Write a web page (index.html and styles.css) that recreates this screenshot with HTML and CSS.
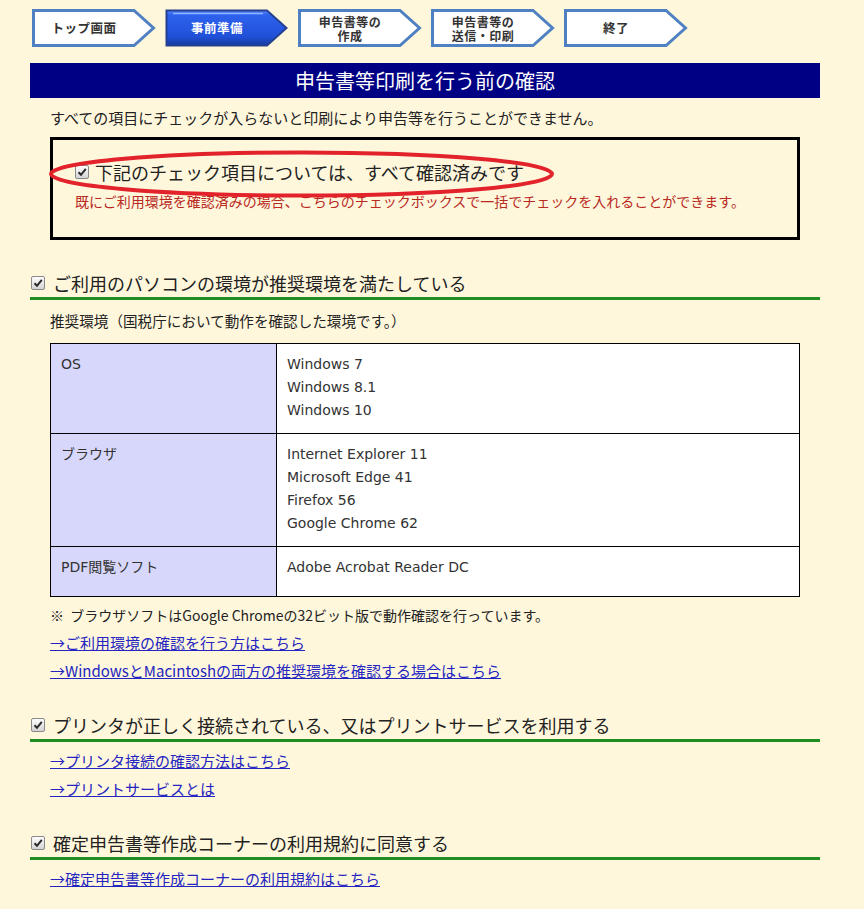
FILE: index.html
```html
<!DOCTYPE html>
<html lang="ja">
<head>
    <meta charset="UTF-8">
    <meta name="viewport" content="width=device-width, initial-scale=1.0">
    <title>申告書等印刷を行う前の確認</title>
    <link rel="stylesheet" href="styles.css">
</head>
<body>
    <div class="page">
        <div class="steps">
            <div class="step">トップ画面</div>
            <div class="step step-active">事前準備</div>
            <div class="step two-line">申告書等の<br>作成</div>
            <div class="step two-line">申告書等の<br>送信・印刷</div>
            <div class="step">終了</div>
        </div>

        <h1 class="page-title">申告書等印刷を行う前の確認</h1>
        <p class="intro">すべての項目にチェックが入らないと印刷により申告等を行うことができません。</p>

        <div class="confirm-all">
            <div class="confirm-row">
                <span class="check"><svg width="10" height="10" viewBox="0 0 10 10"><path d="M1.5 5.2 L4 7.8 L8.8 1.8" fill="none" stroke="#2b2b2b" stroke-width="2"/></svg></span>
                <span>下記のチェック項目については、すべて確認済みです</span>
            </div>
            <p class="confirm-note">既にご利用環境を確認済みの場合、こちらのチェックボックスで一括でチェックを入れることができます。</p>
            <svg class="ring" width="507" height="48" viewBox="0 0 507 48">
                <ellipse cx="253.5" cy="24" rx="250.5" ry="21.5" fill="none" stroke="#e3232b" stroke-width="4"/>
            </svg>
        </div>

        <h2 class="section-title">
            <span class="check"><svg width="10" height="10" viewBox="0 0 10 10"><path d="M1.5 5.2 L4 7.8 L8.8 1.8" fill="none" stroke="#2b2b2b" stroke-width="2"/></svg></span>
            ご利用のパソコンの環境が推奨環境を満たしている
        </h2>
        <div class="section-body">
            <p class="lead">推奨環境（国税庁において動作を確認した環境です。）</p>
            <table class="env-table">
                <tr>
                    <th>OS</th>
                    <td>Windows 7<br>Windows 8.1<br>Windows 10</td>
                </tr>
                <tr>
                    <th>ブラウザ</th>
                    <td>Internet Explorer 11<br>Microsoft Edge 41<br>Firefox 56<br>Google Chrome 62</td>
                </tr>
                <tr class="short-row">
                    <th>PDF閲覧ソフト</th>
                    <td>Adobe Acrobat Reader DC</td>
                </tr>
            </table>
            <p class="note">※&nbsp; ブラウザソフトはGoogle Chromeの32ビット版で動作確認を行っています。</p>
            <a class="link" href="#">→ご利用環境の確認を行う方はこちら</a>
            <a class="link" href="#">→WindowsとMacintoshの両方の推奨環境を確認する場合はこちら</a>
        </div>

        <h2 class="section-title">
            <span class="check"><svg width="10" height="10" viewBox="0 0 10 10"><path d="M1.5 5.2 L4 7.8 L8.8 1.8" fill="none" stroke="#2b2b2b" stroke-width="2"/></svg></span>
            プリンタが正しく接続されている、又はプリントサービスを利用する
        </h2>
        <div class="section-body tight">
            <a class="link" href="#">→プリンタ接続の確認方法はこちら</a>
            <a class="link" href="#">→プリントサービスとは</a>
        </div>

        <h2 class="section-title">
            <span class="check"><svg width="10" height="10" viewBox="0 0 10 10"><path d="M1.5 5.2 L4 7.8 L8.8 1.8" fill="none" stroke="#2b2b2b" stroke-width="2"/></svg></span>
            確定申告書等作成コーナーの利用規約に同意する
        </h2>
        <div class="section-body tight">
            <a class="link" href="#">→確定申告書等作成コーナーの利用規約はこちら</a>
        </div>
    </div>
</body>
</html>
```

FILE: styles.css
```css
body {
    margin: 0;
    background-color: #fff7dc;
    color: #222;
    font-family: "Noto Sans CJK JP", sans-serif;
}
.page {
    width: 790px;
    padding: 9px 0 0 30px;
}
p, h1, h2 {
    margin: 0;
}
.steps {
    display: flex;
    gap: 9px;
    margin-left: 2px;
    height: 38px;
}
.step {
    display: flex;
    align-items: center;
    justify-content: center;
    box-sizing: border-box;
    width: 124px;
    height: 38px;
    padding-right: 20px;
    text-align: center;
    font-size: 12.5px;
    font-weight: bold;
    letter-spacing: 0.5px;
    line-height: 14px;
    color: #333;
    background: url("data:image/svg+xml,%3Csvg xmlns='http://www.w3.org/2000/svg' width='124' height='38'%3E%3Cpolygon points='1.5,1.5 102,1.5 121.5,19 102,36.5 1.5,36.5' fill='white' stroke='%234f81c2' stroke-width='3'/%3E%3C/svg%3E") no-repeat;
}
.step.two-line {
    font-size: 12px;
    line-height: 14px;
    padding-top: 1px;
}
.step-active {
    color: #fff;
    background: url("data:image/svg+xml,%3Csvg xmlns='http://www.w3.org/2000/svg' width='124' height='38'%3E%3Cdefs%3E%3ClinearGradient id='g' x1='0' y1='0' x2='0' y2='1'%3E%3Cstop offset='0' stop-color='%235b8bff'/%3E%3Cstop offset='0.12' stop-color='%232e62ee'/%3E%3Cstop offset='0.75' stop-color='%232050d8'/%3E%3Cstop offset='1' stop-color='%23163a9e'/%3E%3C/linearGradient%3E%3C/defs%3E%3Cpolygon points='1.5,1.5 102,1.5 121.5,19 102,36.5 1.5,36.5' fill='url(%23g)' stroke='%2324418f' stroke-width='2'/%3E%3Cline x1='8' y1='4.5' x2='98' y2='4.5' stroke='%238fb4ff' stroke-width='1.5'/%3E%3C/svg%3E") no-repeat;
}
.page-title {
    margin-top: 16px;
    height: 35px;
    line-height: 35px;
    background-color: #000084;
    color: #fff;
    text-align: center;
    font-size: 20px;
    font-weight: normal;
}
.intro {
    margin: 9px 0 0 20px;
    font-size: 15px;
    line-height: 22px;
}
.confirm-all {
    position: relative;
    margin: 8px 0 0 20px;
    border: 3px solid #000;
    padding: 19px 0 0 22px;
    width: 722px;
    height: 78px;
}
.confirm-row {
    display: flex;
    align-items: center;
    gap: 6px;
    font-size: 18px;
    line-height: 26px;
}
.confirm-note {
    margin-top: 6px;
    font-size: 14px;
    line-height: 20px;
    color: #b8291f;
}
.ring {
    position: absolute;
    left: -5px;
    top: 10px;
}
.check {
    display: inline-flex;
    align-items: center;
    justify-content: center;
    width: 12px;
    height: 12px;
    border: 1px solid #8a8a8a;
    border-radius: 2px;
    background: linear-gradient(#fdfdfd, #d4d4d4);
    flex-shrink: 0;
}
.section-title {
    display: flex;
    align-items: center;
    gap: 8px;
    margin-top: 30px;
    padding-left: 1px;
    font-size: 18px;
    font-weight: normal;
    line-height: 26px;
    padding-bottom: 1px;
    border-bottom: 3px solid #1f8d1f;
}
.section-body {
    padding-left: 20px;
}
.lead {
    margin-top: 10px;
    font-size: 14.6px;
    line-height: 22px;
}
.env-table {
    margin-top: 11px;
    width: 750px;
    border-collapse: collapse;
    font-family: "DejaVu Sans", "Noto Sans CJK JP", sans-serif;
    font-size: 14px;
    line-height: 23px;
    color: #333;
}
.env-table th, .env-table td {
    border: 1px solid #000;
    padding: 9px 10px 11px;
    vertical-align: top;
    text-align: left;
    font-weight: normal;
}
.env-table th {
    width: 205px;
    background-color: #d7d7fb;
}
.env-table td {
    background-color: #fff;
}
.short-row th, .short-row td {
    height: 29px;
}
.note {
    margin-top: 4px;
    font-size: 14px;
    line-height: 28px;
}
.link {
    display: block;
    font-size: 15px;
    line-height: 28px;
    color: #2424c0;
}
.tight {
    padding-top: 5px;
}
.section-body + .section-title {
    margin-top: 27px;
}
```
